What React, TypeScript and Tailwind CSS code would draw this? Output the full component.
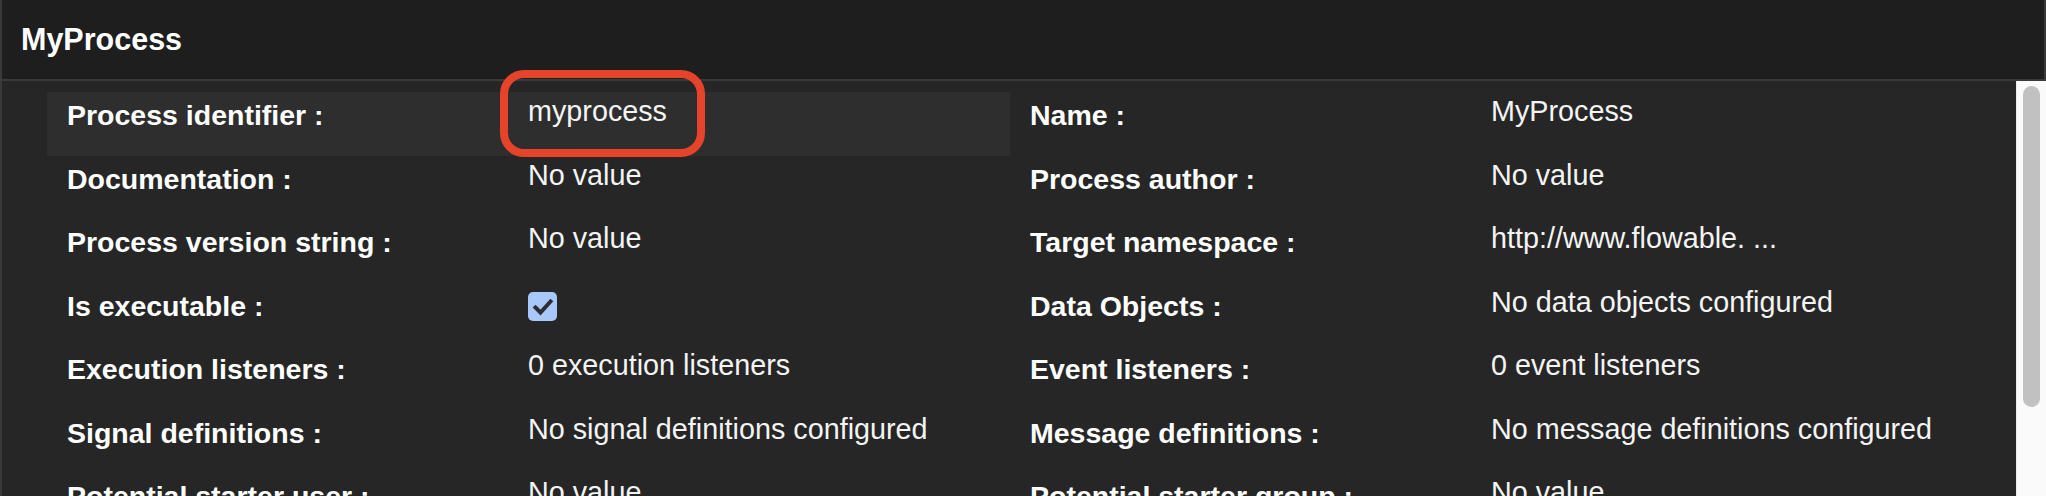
type Field = { label: string; value?: string; checkbox?: boolean };

const rows: [Field, Field][] = [
  [{ label: "Process identifier :", value: "myprocess" }, { label: "Name :", value: "MyProcess" }],
  [{ label: "Documentation :", value: "No value" }, { label: "Process author :", value: "No value" }],
  [
    { label: "Process version string :", value: "No value" },
    { label: "Target namespace :", value: "http://www.flowable. ..." },
  ],
  [{ label: "Is executable :", checkbox: true }, { label: "Data Objects :", value: "No data objects configured" }],
  [
    { label: "Execution listeners :", value: "0 execution listeners" },
    { label: "Event listeners :", value: "0 event listeners" },
  ],
  [
    { label: "Signal definitions :", value: "No signal definitions configured" },
    { label: "Message definitions :", value: "No message definitions configured" },
  ],
  [
    { label: "Potential starter user :", value: "No value" },
    { label: "Potential starter group :", value: "No value" },
  ],
];

function Checkbox() {
  return (
    <span className="flex h-[29px] w-[29px] items-center justify-center rounded-[5px] bg-[#a8c8fb]">
      <svg viewBox="0 0 24 24" className="h-[24px] w-[24px]" fill="none">
        <path d="M4.5 12.5l5 5L19.5 6.5" stroke="#2e2e2e" strokeWidth="4" strokeLinecap="square" />
      </svg>
    </span>
  );
}

function Cell({ field, active }: { field: Field; active?: boolean }) {
  return (
    <div className={`grid h-full grid-cols-[481px_1fr] ${active ? "bg-[#2e2e2e]" : ""}`}>
      <div className="pl-[20px] pt-[6px] text-[28.5px] leading-[34px] font-bold text-white whitespace-nowrap">
        {field.label}
      </div>
      {field.checkbox ? (
        <div className="pt-[9.5px]">
          <Checkbox />
        </div>
      ) : (
        <div className="pt-[2px] text-[28.75px] leading-[34px] text-[#f4f4f4] whitespace-nowrap">{field.value}</div>
      )}
    </div>
  );
}

export default function App() {
  return (
    <div
      className="relative h-[496px] w-[2046px] overflow-hidden border-l-2 border-[#3a3a3a] bg-[#262626]"
      style={{ fontFamily: '"Liberation Sans", Arial, sans-serif' }}
    >
      {/* Header */}
      <header className="flex h-[81px] items-center border-b-2 border-r-2 border-[#3a3a3a] bg-[#1e1e1e] pl-[19px]">
        <h1 className="text-[30.5px] font-bold text-white">MyProcess</h1>
      </header>

      {/* Body */}
      <div className="flex h-[415px]">
        <main className="flex-1 pl-[45px] pt-[11px]">
          {rows.map(([left, right], i) => (
            <div key={i} className="grid h-[63.5px] grid-cols-[963px_963px]">
              <Cell field={left} active={i === 0} />
              <Cell field={right} />
            </div>
          ))}
        </main>
        <div className="w-[30px] shrink-0 border-l border-[#ececec] bg-[#fafafa] pl-[6px] pt-[5px]">
          <div className="h-[321px] w-[17px] rounded-full bg-[#c1c1c1]" />
        </div>
      </div>

      {/* green marker on the left edge */}
      <div className="absolute left-[-2px] top-[57px] h-[63px] w-[2px] bg-[#3f9a63]" />

      {/* red annotation box */}
      <div className="absolute left-[498px] top-[70px] h-[87px] w-[205px] rounded-[24px] border-[8px] border-[#e6432b]" />
    </div>
  );
}
